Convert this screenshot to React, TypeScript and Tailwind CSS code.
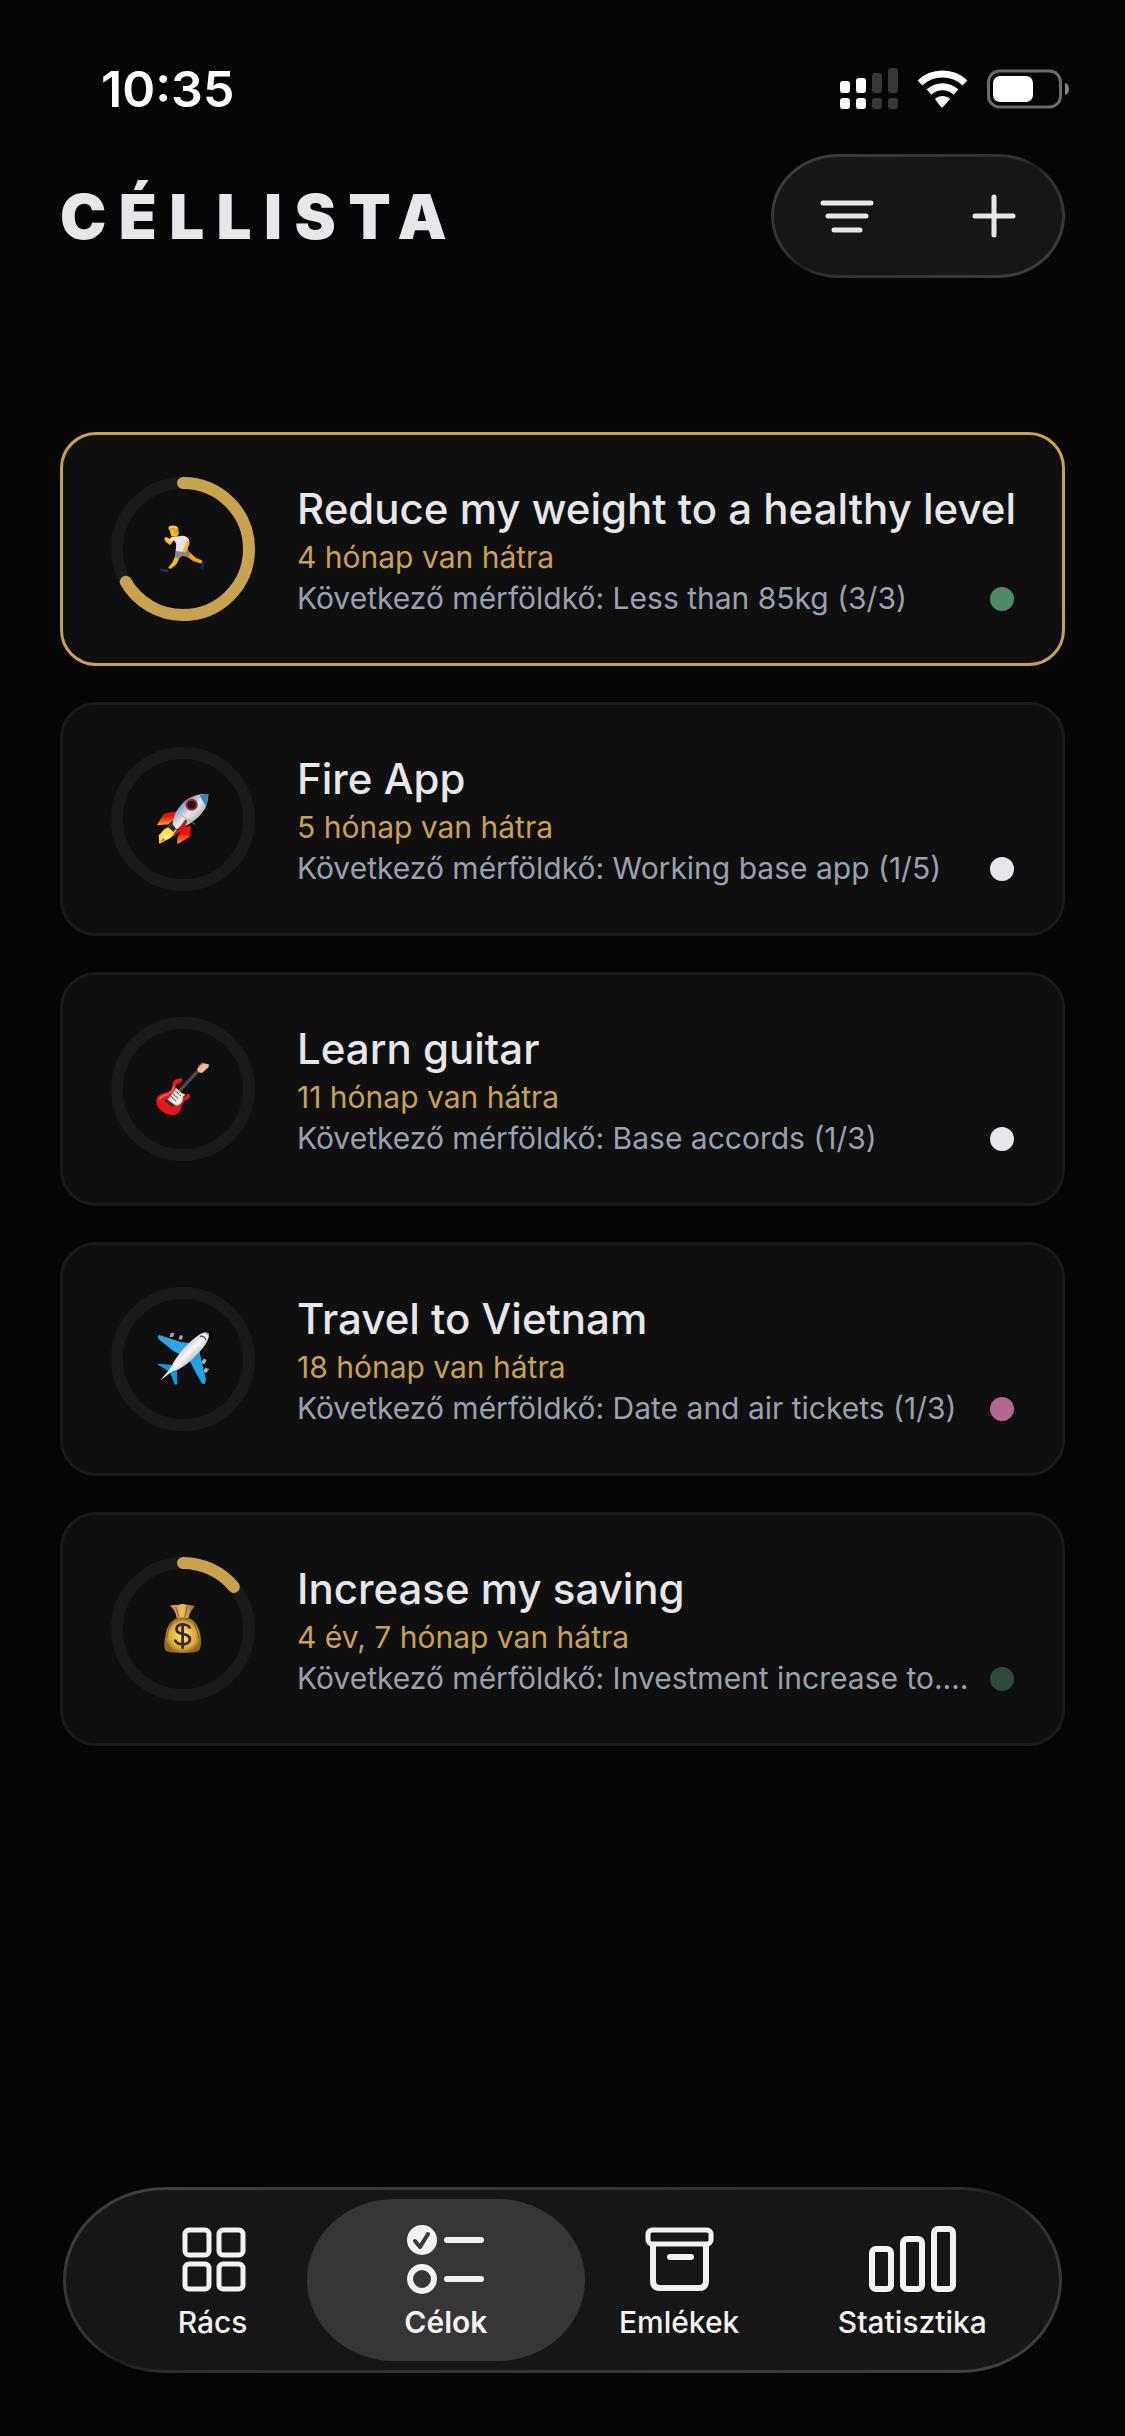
import type { ReactNode } from "react";
import clsx from "clsx";

const Runner = () => (
  <>
    <path d="M98 92l26 24 20 9-3 9-26-9-24-18z" fill="#f5a800" />
    <path d="M142 126l7 2-3 26-8-8z" fill="#16226e" />
    <path d="M69 100l12 8-13 28-17 14-7-4 13-17z" fill="#ffb908" />
    <path d="M20 149l24 2 3 5-8 5-20-7z" fill="#1b2878" />
    <path d="M66 90l34-4 8 22-8 7-14-5-11 9-12-5z" fill="#858487" />
    <path d="M54 54l32-4c12 1 20 8 19 18l-8 24-3 8-28-4 1-22-6-10-8 8-9-8z" fill="#e4e3e8" />
    <path d="M36 54l10 4 9 14-6 6-12-10-4-8z" fill="#ffc01c" />
    <path d="M98 64l9 6-5 15-9 16-8-3 9-21z" fill="#ffb60b" />
    <path d="M48 32l22-8 5 20-7 10-15-2z" fill="#ffba13" />
    <path d="M44 28c2-8 10-10 18-8 11 0 14 9 11 19l-4 8-6-5-3-9-13 1z" fill="#e9a40b" />
    <path d="M47 26c8-5 15-3 22 1" fill="none" stroke="#ffdd66" strokeWidth="4" />
  </>
);

const Rocket = () => (
  <>
    <defs>
      <linearGradient id="hull" x1="0" y1="0" x2="1" y2="1">
        <stop offset=".15" stopColor="#2874ba" />
        <stop offset=".5" stopColor="#e6eae9" />
        <stop offset=".8" stopColor="#9aa3a8" />
      </linearGradient>
      <linearGradient id="fin" x1="0" y1="0" x2="0" y2="1">
        <stop offset=".4" stopColor="#f80f00" />
        <stop offset="1" stopColor="#ffab16" />
      </linearGradient>
    </defs>
    <path d="M74 65c-16 5-28 5-42 9L11 109l35-3 17-17z" fill="url(#fin)" />
    <path d="M86 115l24-4-4 33-36 22 1-21z" fill="url(#fin)" />
    <path d="M52 110l20 15-21 22-33 17-1-25 16-18z" fill="#ffe13c" />
    <path d="M20 158l16-27 3 11 15-19-10 27-10-3z" fill="#fff19b" />
    <path d="M20 158l10-12 5 8z" fill="#f16a15" />
    <path d="M49 101l18 18-8 10-18-17z" fill="#29303d" />
    <path d="M56 106c5-37 26-70 61-84 15-7 28-8 43-7 1 22-7 46-22 62-18 20-38 33-70 44z" fill="url(#hull)" />
    <path d="M135 18c9-3 17-4 25-3 1 12-2 25-8 36z" fill="#3d82c0" />
    <path d="M83 79l39 27" stroke="#93938b" strokeWidth="2" />
    <path d="M93 91c-6 15-19 26-32 42l-1 10c20-16 34-28 40-48z" fill="#c41a13" />
    <circle cx="112" cy="47" r="18" fill="#d3151d" />
    <circle cx="112" cy="47" r="12" fill="#10161d" />
  </>
);

const Guitar = () => (
  <>
    <path d="M76 96l64-71" stroke="#4b4847" strokeWidth="9" />
    <path d="M80 97l62-68" stroke="#aaa39d" strokeWidth="2" strokeDasharray="2 5" />
    <path d="M128 30l14-18 20 4-1 9-19 17-10-2z" fill="#f3ba8c" />
    <path d="M130 24l14-12" stroke="#6c6661" strokeWidth="4" />
    <path
      d="M82 58c-6 2-15 1-22 8-5 9-1 21-7 27-8 8-22 6-35 16-13 10-10 28 2 42 14 17 40 21 50 13 12-10 12-25 20-36 5-8 16-6 18-17 0-7-8-10-11-3-4 6-12 9-17 1-5-8-14-15-14-26 0-9 15-9 20-20z"
      fill="#ed151b"
    />
    <path d="M19 121c4-10 13-10 22-14 13-6 17-14 19-27" fill="none" stroke="#ff6560" strokeWidth="4" />
    <path d="M67 87l-18 27-12 13 34 13 13-9 3-18 7-6-12-6z" fill="#eee9e5" />
    <path d="M39 119l23 18-6 7-24-18z" fill="#35323a" />
    <path d="M51 111l16 15M57 103l15 15M65 95l15 15" stroke="#393331" strokeWidth="3" strokeDasharray="4 2" />
    <path d="M28 153l4 4M75 144l18-24" stroke="#5f4441" strokeWidth="3" />
  </>
);

const Plane = () => (
  <>
    <defs>
      <linearGradient id="body" x1="0" y1="0" x2="1" y2="1">
        <stop offset=".3" stopColor="#aaa5a5" />
        <stop offset=".5" stopColor="#f9f8fa" />
        <stop offset=".75" stopColor="#8b898c" />
      </linearGradient>
    </defs>
    <path d="M48 24l4-13 10 2-4 11zM74 31l4-12 9 1-3 12zM139 103l7-14 10 3-6 13zM145 130l6-14 12 4-8 11z" fill="#aaa7a9" />
    <path d="M13 22l5-4 65 22 29 2-24 39-29-15-43-36z" fill="#2ca5e6" />
    <path d="M98 78l34-25 7 34 15 67-4 11-8-1-21-39z" fill="#22a0e4" />
    <path d="M12 106l8-2 35 4-8 20zM48 127l21-7 2 45-8 2z" fill="#1597df" />
    <path d="M20 155l27-33 8-13C68 80 107 34 136 16c10-8 25-7 26 0 2 17-16 43-37 63-16 18-36 35-53 43l-16 5z" fill="url(#body)" />
    <path d="M151 11c7-2 12 1 11 9z" fill="#2b9de0" />
    <path d="M136 22c7-2 14 2 18 11" fill="none" stroke="#57585b" strokeWidth="4" />
  </>
);

const MoneyBag = () => (
  <>
    <defs>
      <radialGradient id="bag">
        <stop offset=".2" stopColor="#f5d969" />
        <stop offset=".75" stopColor="#d5a936" />
        <stop offset="1" stopColor="#966a20" />
      </radialGradient>
      <linearGradient id="neck" x1="0" y1="0" x2="1" y2="0">
        <stop stopColor="#b67d31" />
        <stop offset=".5" stopColor="#eac16b" />
        <stop offset="1" stopColor="#9d6725" />
      </linearGradient>
    </defs>
    <path d="M49 20c10-5 17 0 24-3 9-3 17-3 24 0 9 2 15 0 24 4-7 10-15 20-18 38l-33 1C66 41 60 29 49 20z" fill="url(#neck)" />
    <path d="M67 58l38-1c19 8 31 31 33 57 4 18 0 36-6 42-15 8-79 8-94 0-7-8-6-29-2-44 3-28 13-43 31-54z" fill="url(#bag)" />
    <path d="M67 60c12-4 26-3 38 0M66 24l9 30M100 20l-8 34M58 70c-12 14-17 32-18 46M118 73c9 14 13 28 14 47" fill="none" stroke="#8a5a1c" strokeWidth="3" />
    <path d="M107 89c-2-16-39-19-39 1 0 21 39 9 39 31 0 21-41 19-43 1M86 75v74" fill="none" stroke="#35292b" strokeWidth="8" />
  </>
);

type Goal = {
  title: string;
  left: string;
  milestone: string;
  progress: number;
  dot: string;
  icon: ReactNode;
  selected?: boolean;
};

const goals: Goal[] = [
  {
    title: "Reduce my weight to a healthy level",
    left: "4 hónap van hátra",
    milestone: "Less than 85kg (3/3)",
    progress: 66.7,
    dot: "bg-[#4f8a68]",
    icon: <Runner />,
    selected: true,
  },
  {
    title: "Fire App",
    left: "5 hónap van hátra",
    milestone: "Working base app (1/5)",
    progress: 0,
    dot: "bg-gray-200",
    icon: <Rocket />,
  },
  {
    title: "Learn guitar",
    left: "11 hónap van hátra",
    milestone: "Base accords (1/3)",
    progress: 0,
    dot: "bg-gray-200",
    icon: <Guitar />,
  },
  {
    title: "Travel to Vietnam",
    left: "18 hónap van hátra",
    milestone: "Date and air tickets (1/3)",
    progress: 0,
    dot: "bg-[#b0688f]",
    icon: <Plane />,
  },
  {
    title: "Increase my saving",
    left: "4 év, 7 hónap van hátra",
    milestone: "Investment increase to.…",
    progress: 14,
    dot: "bg-[#2d4a3a]",
    icon: <MoneyBag />,
  },
];

const tabs = [
  {
    label: "Rács",
    icon: (
      <g strokeWidth="5">
        <rect x="12" y="6" width="24" height="25" rx="4" />
        <rect x="46" y="6" width="24" height="25" rx="4" />
        <rect x="12" y="40" width="24" height="25" rx="4" />
        <rect x="46" y="40" width="24" height="25" rx="4" />
      </g>
    ),
  },
  {
    label: "Célok",
    active: true,
    icon: (
      <>
        <circle cx="16" cy="16" r="15" fill="currentColor" stroke="none" />
        <path d="M9 17l5 6 8-13" stroke="#363636" strokeWidth="4" />
        <circle cx="16" cy="55" r="12" strokeWidth="6" />
        <path d="M41 16h34M41 55h34" strokeWidth="6" />
      </>
    ),
  },
  {
    label: "Emlékek",
    icon: (
      <>
        <rect x="9" y="6" width="63" height="14" rx="4" strokeWidth="5" />
        <path d="M14 21v36q0 7 7 7h39q7 0 7-7V21" strokeWidth="6" />
        <path d="M31 33h21" strokeWidth="6" />
      </>
    ),
  },
  {
    label: "Statisztika",
    icon: (
      <g strokeWidth="6">
        <rect x="0" y="25" width="19" height="40" rx="4" />
        <rect x="31" y="15" width="19" height="50" rx="4" />
        <rect x="62" y="5" width="19" height="60" rx="4" />
      </g>
    ),
  },
];

const glass =
  "border-3 border-transparent [background:linear-gradient(#161616,#161616)_padding-box,linear-gradient(to_bottom_right,#404040,#303030_44%,#1c1c1c_50%,#303030_56%,#404040)_border-box]";

function StatusBar() {
  return (
    <div className="flex h-[154px] items-center justify-between pt-6 pr-[55px] pl-[101px] text-white">
      <span className="text-[50px] leading-none font-semibold">10:35</span>
      <div className="flex items-center gap-[19px]">
        <svg width="58" height="42" viewBox="0 0 58 42" fill="currentColor" aria-hidden="true">
          <rect x="0" y="13" width="10" height="12" rx="3" />
          <rect x="0" y="30" width="10" height="11" rx="3" />
          <rect x="16" y="10" width="10" height="15" rx="3" />
          <rect x="16" y="30" width="10" height="11" rx="3" />
          <g fill="#373737">
            <rect x="32" y="5" width="10" height="20" rx="3" />
            <rect x="32" y="30" width="10" height="11" rx="3" />
            <rect x="48" y="0" width="10" height="25" rx="3" />
            <rect x="48" y="30" width="10" height="11" rx="3" />
          </g>
        </svg>
        <svg width="51" height="38" viewBox="0 0 51 38" fill="none" aria-hidden="true">
          <path d="M3 13C15 1 36 1 48 13M12 22C20 15 31 15 39 22" stroke="currentColor" strokeWidth="7" />
          <path d="M18 29c4-4 11-4 15 0l-7 8q-1 1-2 0z" fill="currentColor" />
        </svg>
        <svg width="83" height="40" viewBox="0 0 83 40" fill="none" aria-hidden="true">
          <rect x="1.5" y="2" width="72" height="36" rx="11" stroke="#6b6b6b" strokeWidth="3" />
          <rect x="6" y="7" width="40" height="26" rx="7" fill="currentColor" />
          <path d="M78 14q4 1 4 6t-4 6z" fill="#858585" />
        </svg>
      </div>
    </div>
  );
}

function ProgressRing({ progress, children }: { progress: number; children: ReactNode }) {
  return (
    <div className="grid size-36 shrink-0 place-items-center">
      <svg className="col-start-1 row-start-1 size-36 -rotate-90" viewBox="0 0 144 144" fill="none" aria-hidden="true">
        <circle cx="72" cy="72" r="66" stroke="#1a1a1a" strokeWidth="12" />
        {progress > 0 && (
          <circle
            cx="72"
            cy="72"
            r="66"
            stroke="#c9a24d"
            strokeWidth="12"
            strokeLinecap="round"
            pathLength="100"
            strokeDasharray={`${progress} 100`}
          />
        )}
      </svg>
      <svg
        className="col-start-1 row-start-1 size-[60px]"
        viewBox="0 0 174 180"
        preserveAspectRatio="none"
        aria-hidden="true"
      >
        {children}
      </svg>
    </div>
  );
}

function GoalCard({ goal }: { goal: Goal }) {
  return (
    <li
      className={clsx(
        "flex h-[234px] items-center gap-[42px] rounded-[36px] border-3 bg-[#0f0f0f] px-12",
        goal.selected ? "border-[#c9a24d]" : "border-[#1a1a1a]",
      )}
    >
      <ProgressRing progress={goal.progress}>{goal.icon}</ProgressRing>
      <div className="min-w-0 flex-1 pt-0.5">
        <h2 className="text-[42px] leading-[56px] font-medium whitespace-nowrap text-gray-200">{goal.title}</h2>
        <p className="text-[30px] leading-[41px] text-[#c9a24d]">{goal.left}</p>
        <div className="flex items-center justify-between gap-4">
          <p className="truncate text-[30px] leading-[41px] text-gray-400">Következő mérföldkő: {goal.milestone}</p>
          <span className={clsx("size-6 shrink-0 rounded-full", goal.dot)} />
        </div>
      </div>
    </li>
  );
}

export default function App() {
  return (
    <div className="flex min-h-screen flex-col bg-[#050505] font-['Inter',sans-serif]">
      <StatusBar />

      <header className="mx-[60px] flex h-[124px] items-center justify-between">
        <h1 className="pt-0.5 text-[62px] leading-none font-black tracking-[0.2em] text-gray-200">CÉLLISTA</h1>
        <div className={clsx("flex h-full w-[294px] items-center justify-between rounded-[67px/62px] pr-[38px] pl-[39px]", glass)}>
          <button type="button" aria-label="Szűrés" className="text-gray-200">
            <svg width="66" height="60" viewBox="0 0 66 60" fill="none" stroke="currentColor" strokeWidth="5" strokeLinecap="round" aria-hidden="true">
              <path d="M10 17h48M15 30h38M21 44h26" />
            </svg>
          </button>
          <button type="button" aria-label="Új cél" className="text-gray-200">
            <svg width="60" height="60" viewBox="0 0 60 60" fill="none" stroke="currentColor" strokeWidth="5" strokeLinecap="round" aria-hidden="true">
              <path d="M30 11v38M11 30h38" />
            </svg>
          </button>
        </div>
      </header>

      <ul className="mx-[60px] mt-[154px] mb-12 flex flex-col gap-9">
        {goals.map((goal) => (
          <GoalCard key={goal.title} goal={goal} />
        ))}
      </ul>

      <nav className={clsx("mx-[63px] mt-auto mb-[63px] grid h-[186px] grid-cols-4 rounded-[102px/93px] px-[30px] py-[9px]", glass)}>
        {tabs.map((tab) => (
          <a
            key={tab.label}
            href="#"
            aria-current={tab.active ? "page" : undefined}
            className={clsx(
              "flex flex-col items-center justify-center gap-2 pt-1 text-[#f2f2f2]",
              tab.active && "-mx-[22px] rounded-[87px/81px] bg-[#363636]",
            )}
          >
            <svg
              className="overflow-visible"
              width="80"
              height="72"
              viewBox="0 0 80 72"
              fill="none"
              stroke="currentColor"
              strokeLinecap="round"
              strokeLinejoin="round"
              aria-hidden="true"
            >
              {tab.icon}
            </svg>
            <span className={clsx("text-[30px] leading-9", tab.active ? "font-semibold" : "font-medium")}>{tab.label}</span>
          </a>
        ))}
      </nav>
    </div>
  );
}
